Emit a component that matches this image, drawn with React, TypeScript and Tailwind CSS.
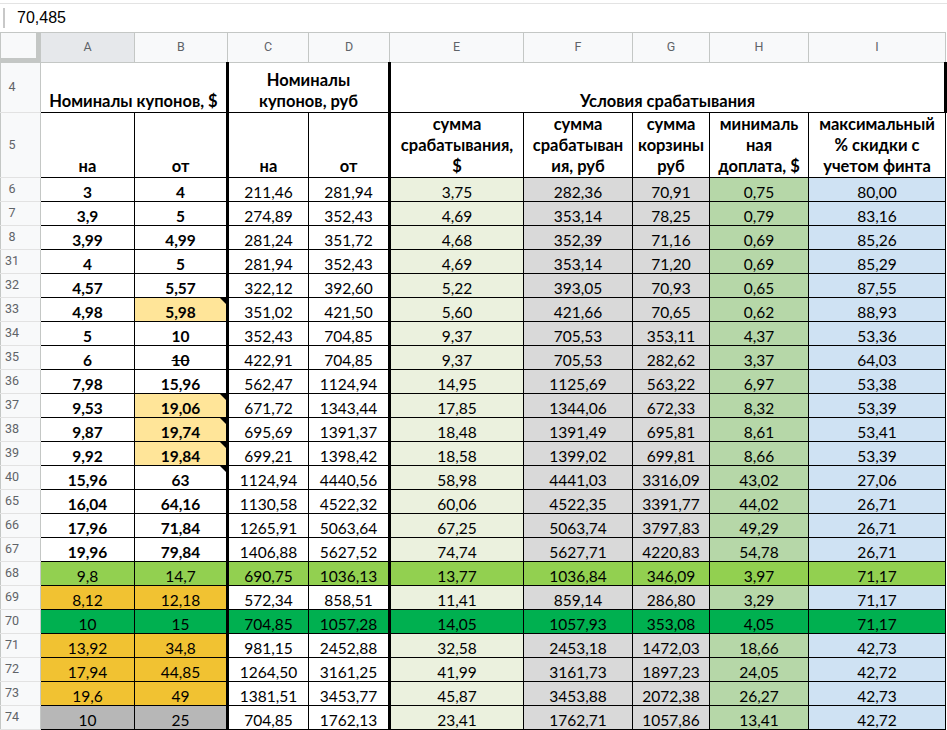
import React from "react";

type Row = [number, string, string, string, string, string, string, string, string, string];

const rows: Row[] = [
    [6, "3", "4", "211,46", "281,94", "3,75", "282,36", "70,91", "0,75", "80,00"],
    [7, "3,9", "5", "274,89", "352,43", "4,69", "353,14", "78,25", "0,79", "83,16"],
    [8, "3,99", "4,99", "281,24", "351,72", "4,68", "352,39", "71,16", "0,69", "85,26"],
    [31, "4", "5", "281,94", "352,43", "4,69", "353,14", "71,20", "0,69", "85,29"],
    [32, "4,57", "5,57", "322,12", "392,60", "5,22", "393,05", "70,93", "0,65", "87,55"],
    [33, "4,98", "5,98", "351,02", "421,50", "5,60", "421,66", "70,65", "0,62", "88,93"],
    [34, "5", "10", "352,43", "704,85", "9,37", "705,53", "353,11", "4,37", "53,36"],
    [35, "6", "10", "422,91", "704,85", "9,37", "705,53", "282,62", "3,37", "64,03"],
    [36, "7,98", "15,96", "562,47", "1124,94", "14,95", "1125,69", "563,22", "6,97", "53,38"],
    [37, "9,53", "19,06", "671,72", "1343,44", "17,85", "1344,06", "672,33", "8,32", "53,39"],
    [38, "9,87", "19,74", "695,69", "1391,37", "18,48", "1391,49", "695,81", "8,61", "53,41"],
    [39, "9,92", "19,84", "699,21", "1398,42", "18,58", "1399,02", "699,81", "8,66", "53,39"],
    [40, "15,96", "63", "1124,94", "4440,56", "58,98", "4441,03", "3316,09", "43,02", "27,06"],
    [65, "16,04", "64,16", "1130,58", "4522,32", "60,06", "4522,35", "3391,77", "44,02", "26,71"],
    [66, "17,96", "71,84", "1265,91", "5063,64", "67,25", "5063,74", "3797,83", "49,29", "26,71"],
    [67, "19,96", "79,84", "1406,88", "5627,52", "74,74", "5627,71", "4220,83", "54,78", "26,71"],
    [68, "9,8", "14,7", "690,75", "1036,13", "13,77", "1036,84", "346,09", "3,97", "71,17"],
    [69, "8,12", "12,18", "572,34", "858,51", "11,41", "859,14", "286,80", "3,29", "71,17"],
    [70, "10", "15", "704,85", "1057,28", "14,05", "1057,93", "353,08", "4,05", "71,17"],
    [71, "13,92", "34,8", "981,15", "2452,88", "32,58", "2453,18", "1472,03", "18,66", "42,73"],
    [72, "17,94", "44,85", "1264,50", "3161,25", "41,99", "3161,73", "1897,23", "24,05", "42,72"],
    [73, "19,6", "49", "1381,51", "3453,77", "45,87", "3453,88", "2072,38", "26,27", "42,73"],
    [74, "10", "25", "704,85", "1762,13", "23,41", "1762,71", "1057,86", "13,41", "42,72"],
];

// default fill per column A..I
const colBg = ["bg-white", "bg-white", "bg-white", "bg-white", "bg-[#ebf1de]", "bg-[#d9d9d9]", "bg-[#d9d9d9]", "bg-[#b6d7a8]", "bg-[#cfe2f3]"];
const commented = [33, 37, 38, 39, 40];
const paleYellow = [33, 37, 38, 39];
const orange = [69, 71, 72, 73];

function cellBg(row: number, col: number) {
    if (row === 68) return "bg-[#92d050]";
    if (row === 70) return "bg-[#00b050]";
    if (col < 2 && orange.includes(row)) return "bg-[#f1c232]";
    if (col < 2 && row === 74) return "bg-[#b7b7b7]";
    if (col === 1 && paleYellow.includes(row)) return "bg-[#ffe599]";
    return colBg[col];
}

const letters = ["A", "B", "C", "D", "E", "F", "G", "H", "I"];
const widths = ["w-[94px]", "w-[93px]", "w-[81px]", "w-[81px]", "w-[134px]", "w-[109px]", "w-[77px]", "w-[99px]", "w-[137px]"];

const RowHead = ({ n, className = "" }: { n: number; className?: string }) => (
    <th className={`p-0 bg-[#f8f9fa] border border-[#c4c7c5] border-t-[#e2e2e2] border-b-[#e2e2e2] font-normal text-left align-middle text-[12.5px] text-[#5f6368] font-['Roboto',sans-serif] ${className}`}>
        <span className="inline-block w-[22px] text-center">{n}</span>
    </th>
);

export default function App() {
    return (
        <div className="w-[947px] h-[730px] overflow-hidden bg-white text-black">
            {/* formula bar */}
            <div className="pt-[3px]">
                <div className="flex items-center h-[29px] border-t border-[#e3e3e3]">
                    <div className="ml-[3px] w-[2px] h-[20px] bg-[#c8c8c8]" />
                    <span className="ml-[12px] text-[16px] font-['Liberation_Sans',Arial,sans-serif]">70,485</span>
                </div>
            </div>

            <table className="border-collapse table-fixed w-[947px] font-['Lato','Open_Sans',sans-serif] text-[15.5px]">
                <colgroup>
                    <col className="w-[40px]" />
                    {widths.map((w, i) => (
                        <col key={i} className={w} />
                    ))}
                </colgroup>
                <thead>
                    <tr className="h-[30px]">
                        <th className="p-0 bg-[#f8f9fa] border border-[#c4c7c5] align-top">
                            <div className="h-[29px] border-r-[4px] border-b-[4px] border-[#c4c7c5]" />
                        </th>
                        {letters.map((l, i) => (
                            <th
                                key={l}
                                className={`p-0 border border-[#c4c7c5] font-normal text-[12.5px] text-[#5f6368] font-['Roboto',sans-serif] align-middle ${i === 0 ? "bg-[#e6e8eb]" : "bg-[#f8f9fa]"}`}
                            >
                                {l}
                            </th>
                        ))}
                    </tr>
                </thead>
                <tbody className="[&_.hd]:text-[16.5px]">
                    <tr className="h-[50px]">
                        <RowHead n={4} />
                        <td colSpan={2} className="hd p-0 border-b border-black text-center align-bottom font-bold leading-[21px]">
                            Номиналы купонов, $
                        </td>
                        <td colSpan={2} className="hd p-0 border-b border-l-[3px] border-black text-center align-bottom font-bold leading-[21px]">
                            Номиналы
                            <br />
                            купонов, руб
                        </td>
                        <td colSpan={5} className="hd p-0 border-b border-l-[3px] border-r-[3px] border-black text-center align-bottom font-bold leading-[21px]">
                            Условия срабатывания
                        </td>
                    </tr>
                    <tr className="h-[65px]">
                        <RowHead n={5} />
                        {[
                            ["на"],
                            ["от"],
                            ["на"],
                            ["от"],
                            ["сумма", "срабатывания,", "$"],
                            ["сумма", "срабатыван", "ия, руб"],
                            ["сумма", "корзины", "руб"],
                            ["минималь", "ная", "доплата, $"],
                            ["максимальный", "% скидки с", "учетом финта"],
                        ].map((lines, i) => (
                            <td
                                key={i}
                                className={`hd p-0 border border-black text-center align-bottom font-bold leading-[21px] whitespace-nowrap ${i === 2 || i === 4 ? "border-l-[3px]" : ""}`}
                            >
                                {lines.map((t, j) => (
                                    <div key={j}>{t}</div>
                                ))}
                            </td>
                        ))}
                    </tr>
                    {rows.map((r) => {
                        const n = r[0];
                        const bold = n <= 67;
                        return (
                            <tr key={n} className="h-[24px]">
                                <RowHead n={n} />
                                {r.slice(1).map((v, i) => (
                                    <td
                                        key={i}
                                        className={`relative p-0 border border-black text-center align-bottom leading-[18px] whitespace-nowrap ${cellBg(n, i)} ${i === 2 || i === 4 ? "border-l-[3px]" : ""} ${bold && i < 2 ? "font-bold" : ""}`}
                                    >
                                        <span className={n === 35 && i === 1 ? "line-through" : ""}>{v}</span>
                                        {i === 1 && commented.includes(n) && (
                                            <span className="absolute top-0 right-0 w-0 h-0 border-l-[6px] border-l-transparent border-t-[6px] border-t-black" />
                                        )}
                                    </td>
                                ))}
                            </tr>
                        );
                    })}
                </tbody>
            </table>
        </div>
    );
}
